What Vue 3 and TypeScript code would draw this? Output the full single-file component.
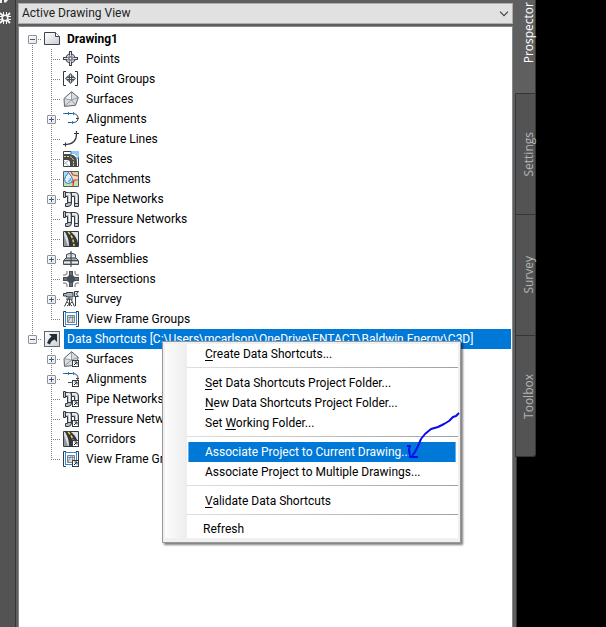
<script setup lang="ts">
import { ref } from 'vue'

interface TreeNode {
  label: string
  icon: string
  expandable?: boolean
}

interface TreeGroup {
  label: string
  icon: string
  bold?: boolean
  selected?: boolean
  shortcuts?: boolean
  children: TreeNode[]
}

interface MenuEntry {
  before?: string
  key?: string
  after?: string
  active?: boolean
  plain?: boolean
  separator?: boolean
}

const view = ref('Active Drawing View')

const groups: TreeGroup[] = [
  {
    label: 'Drawing1',
    icon: 'drawing',
    bold: true,
    children: [
      { label: 'Points', icon: 'point' },
      { label: 'Point Groups', icon: 'point-group' },
      { label: 'Surfaces', icon: 'surface' },
      { label: 'Alignments', icon: 'alignment', expandable: true },
      { label: 'Feature Lines', icon: 'feature-line' },
      { label: 'Sites', icon: 'site' },
      { label: 'Catchments', icon: 'catchment' },
      { label: 'Pipe Networks', icon: 'pipe', expandable: true },
      { label: 'Pressure Networks', icon: 'pipe' },
      { label: 'Corridors', icon: 'corridor' },
      { label: 'Assemblies', icon: 'assembly', expandable: true },
      { label: 'Intersections', icon: 'intersection' },
      { label: 'Survey', icon: 'survey', expandable: true },
      { label: 'View Frame Groups', icon: 'view-frame' },
    ],
  },
  {
    label: 'Data Shortcuts [C:\\Users\\mcarlson\\OneDrive\\ENTACT\\Baldwin Energy\\C3D]',
    icon: 'shortcut',
    selected: true,
    shortcuts: true,
    children: [
      { label: 'Surfaces', icon: 'surface', expandable: true },
      { label: 'Alignments', icon: 'alignment', expandable: true },
      { label: 'Pipe Networks', icon: 'pipe' },
      { label: 'Pressure Networks', icon: 'pipe' },
      { label: 'Corridors', icon: 'corridor' },
      { label: 'View Frame Groups', icon: 'view-frame' },
    ],
  },
]

const menu: MenuEntry[] = [
  { key: 'C', after: 'reate Data Shortcuts...' },
  { separator: true },
  { key: 'S', after: 'et Data Shortcuts Project Folder...' },
  { key: 'N', after: 'ew Data Shortcuts Project Folder...' },
  { before: 'Set ', key: 'W', after: 'orking Folder...' },
  { separator: true },
  { before: 'Associate Project to Current Drawing...', active: true },
  { before: 'Associate Project to Multiple Drawings...' },
  { separator: true },
  { key: 'V', after: 'alidate Data Shortcuts' },
  { separator: true },
  { before: 'Refresh', plain: true },
]

const tabs = ['Prospector', 'Settings', 'Survey', 'Toolbox']
const activeTab = ref('Prospector')
</script>

<template>
  <svg class="sprite" width="0" height="0" aria-hidden="true">
    <linearGradient id="paper" x1="0" y1="0" x2="1" y2="1">
      <stop offset="0" stop-color="#fff" />
      <stop offset="1" stop-color="#c9ced4" />
    </linearGradient>
    <symbol id="drawing" viewBox="0 0 16 16">
      <path d="M.5 1.5H11.5L15.5 5.5V13.5H.5Z" fill="url(#paper)" stroke="#3c434d" />
      <path d="M11.5 1.5V5.5H15.5" fill="#fff" stroke="#3c434d" />
    </symbol>
    <symbol id="point" viewBox="0 0 16 16">
      <circle cx="7.5" cy="7.5" r="4.5" fill="#d4d8dc" stroke="#3c434d" stroke-width="1.2" />
      <path d="M7.5 0V4.5M7.5 10.5V15M0 7.5H4.5M10.5 7.5H15" stroke="#3c434d" stroke-width="3" />
      <path d="M7.5 1V5M7.5 10V14M1 7.5H5M10 7.5H14" stroke="#e3e5e8" />
      <rect x="6" y="6" width="3" height="3" fill="#fff" stroke="#3c434d" />
    </symbol>
    <symbol id="point-group" viewBox="0 0 16 16">
      <path d="M3 .5H.5V14.5H3M12 .5H14.5V14.5H12" fill="none" stroke="#303640" />
      <path d="M7.5 2L13 7.5L7.5 13L2 7.5Z" fill="#4a515b" />
      <path d="M7.5 3.5V6M7.5 9V11.5M3.5 7.5H6M9 7.5H11.5" stroke="#d8dbdf" />
      <path d="M5 5H6M9 5H10M5 10H6M9 10H10" stroke="#c4c8cd" />
      <rect x="7" y="7" width="1" height="1" fill="#fff" />
    </symbol>
    <symbol id="surface" viewBox="0 0 16 16">
      <path d="M8.5 .7L15.4 6.4L12.5 14.3L1.5 15.4L1 7.5Z" fill="#d9dcdf" stroke="#59616b" />
      <path d="M8.5 2L8.5 9L2 7.5Z" fill="#f5f5f5" />
      <path d="M8.5 1V9L15 6.5M8.5 9L12.5 14M8.5 9L1.5 15M8.5 9L1 7.5" fill="none" stroke="#858b92" stroke-width=".8" />
    </symbol>
    <symbol id="alignment" viewBox="0 0 16 16">
      <path d="M0 2.5H10" fill="none" stroke="#3f4650" stroke-dasharray="4 1" />
      <path d="M10 2.5Q15 3 15 7Q15 11.5 10 11.5H5" fill="none" stroke="#3f4650" />
      <path d="M0 2.5H2M4 2.5H6M9 2.5H11M8 11.5H10M5.5 1V4M10.5 1V4M9.5 10V13" stroke="#1484df" />
      <path d="M13 7.5H16" stroke="#3f4650" />
    </symbol>
    <symbol id="feature-line" viewBox="0 0 16 16">
      <path d="M0 13.5H3Q13.5 13 13.5 3V0M2.5 11.5V15.5M11 2.5H16" fill="none" stroke="#303640" stroke-width="1.2" />
    </symbol>
    <symbol id="site" viewBox="0 0 16 16">
      <path d="M.5 .5H15.5V15.5H.5Z" fill="#fff" stroke="#3c434d" />
      <path d="M8 0H16V7L11 3H8Z" fill="#91cbf2" />
      <path d="M0 3H7Q14 4 14 11V15H7V12Q7 9 4 9H0Z" fill="#444b55" />
      <path d="M1 5.5H6Q10.5 6 10.5 11V15" fill="none" stroke="#ffd23c" stroke-dasharray="2 1" />
      <path d="M1 10L5.5 15M5 10L1 13" stroke="#a7b0b8" />
      <path d="M8 3V.5M13 7H16" stroke="#1580d0" />
    </symbol>
    <symbol id="catchment" viewBox="0 0 16 16">
      <path d="M.5 .5H15.5V15.5H.5Z" fill="#f5d9c4" stroke="#555c65" />
      <path d="M1 1H6L1 7Z" fill="#a9dbf6" />
      <path d="M10 10L15 9V15H1V12H9Z" fill="#bfe6a8" />
      <path d="M8 1L10 3L15 5V1Z" fill="#b9e3a5" />
      <path d="M8 1L10 4L15 5M15 9H11L10 15M11 9L9 12" fill="none" stroke="#e5322f" stroke-width="1.2" />
      <path d="M5.5 1.5Q9.5 6 9.5 8.5A4 4 0 0 1 1.5 8.5Q1.5 6 5.5 1.5Z" fill="#dff2fd" stroke="#2777b9" />
      <path d="M7.5 7Q8 10 5 10.5" fill="none" stroke="#67b2e5" stroke-width="1.5" />
    </symbol>
    <symbol id="pipe" viewBox="0 0 16 16">
      <path d="M.5 .5H2.5V1.5H5.5Q8.5 1.5 8.5 4V12Q8.5 15.5 5 15.5H2.5V12.5H4.5V5.5H2.5V6.5H.5Z" fill="#b8bdc3" stroke="#343b45" />
      <path d="M7 1.5H12Q15.5 1.5 15.5 5V15.5H11.5V5.5H8.5" fill="#b8bdc3" stroke="#343b45" />
      <path d="M3 3H6Q6.5 3 6.5 4V12M9 3H12Q13.5 3 13.5 5V14" fill="none" stroke="#f4f5f6" stroke-width="1.4" />
      <path d="M2.5 1V6M8.5 1V6M5 11.5H8M12 12.5H15" stroke="#343b45" />
    </symbol>
    <symbol id="corridor" viewBox="0 0 16 16">
      <path d="M.5 .5H15.5V15.5H.5Z" fill="#dfe1e3" stroke="#343b45" />
      <path d="M2 1H8Q14 6 15 12V15H6Q6 7 2 1Z" fill="#30373f" />
      <path d="M5 1Q10.5 6 11 15" fill="none" stroke="#f4ca38" stroke-width="1.6" stroke-dasharray="3 1.5" />
      <path d="M1 4L5 15H1Z" fill="#92979c" />
    </symbol>
    <symbol id="assembly" viewBox="0 0 16 16">
      <path d="M3.5 7V3.5Q8 .5 12.5 3.5V7" fill="#d7dade" stroke="#464d57" />
      <path d="M3 7H13L15.5 9.5V13.5H.5V9.5Z" fill="#aeb3b9" stroke="#464d57" />
      <path d="M1 9.5H15" stroke="#464d57" />
      <path d="M1 11.5H7M9 11.5H15M4 5.5H7M9 5.5H12" stroke="#eceef0" />
      <path d="M8 0V16" stroke="#343b45" />
    </symbol>
    <symbol id="intersection" viewBox="0 0 16 16">
      <path d="M6 0V3Q6 6 3 6H0V10H3Q6 10 6 13V16H10V13Q10 10 13 10H16V6H13Q10 6 10 3V0Z" fill="#464d56" />
      <path d="M4 0V2Q4 4 2 4H0M12 0V2Q12 4 14 4H16M4 16V14Q4 12 2 12H0M12 16V14Q12 12 14 12H16" fill="none" stroke="#646b74" />
      <path d="M8 1V4M8 12V15M1 8H4M12 8H15" stroke="#8b9199" />
    </symbol>
    <symbol id="survey" viewBox="0 0 16 16">
      <path d="M.5 2.5H3.5V1.5H10V6H3.5V5H.5Z" fill="#adb3ba" stroke="#343b45" />
      <path d="M6 6V9M3 8H10M5 8L1.5 15.5M8 8L11.5 15.5M6.5 8V15M4 11L9 15M9 11L4 15" fill="none" stroke="#343b45" />
      <path d="M11.5 .5H15.5L13.5 3L15.5 5.5H11.5ZM12.5 6V15" fill="#dfe2e5" stroke="#343b45" />
    </symbol>
    <symbol id="view-frame" viewBox="0 0 16 16">
      <path d="M3 .5H.5V15.5H3M13 .5H15.5V15.5H13" fill="none" stroke="#343b45" />
      <rect x="2.5" y="1.5" width="11" height="12" fill="#fff" stroke="#2c8ae0" />
      <path d="M4.5 4.5H11.5V11.5H4.5Z" fill="#d9dde1" stroke="#79818a" />
      <path d="M5 6.5H11M8 5L5 11M9.5 5V11" stroke="#79818a" stroke-width=".8" />
    </symbol>
    <symbol id="shortcut" viewBox="0 0 16 16">
      <rect x=".5" y=".5" width="15" height="15" fill="url(#paper)" stroke="#5f666f" />
      <path d="M5 3H13V11L10.5 8.5Q6.5 10 6 13.5L3 12Q4 8 7.5 5.5Z" fill="#262d36" />
    </symbol>
    <symbol id="badge" viewBox="0 0 7 7">
      <rect x=".5" y=".5" width="6" height="6" fill="#fff" stroke="#343b45" />
      <path d="M2 5L4.7 2.3M2.5 2H5V4.5" fill="none" stroke="#20262e" />
    </symbol>
  </svg>

  <div class="app">
    <aside class="rail">
      <svg class="rail-icons" viewBox="0 0 15 26" aria-hidden="true">
        <path d="M0 0H2V3H0ZM4 0H8L6 2.5H4Z" fill="#eee" />
        <path d="M3.5 12V24M6.5 12V24M-1 16.5H11M-1 19.5H11" stroke="#f5f5f5" />
        <path d="M0 13L10 23M10 13L0 23" stroke="#f5f5f5" stroke-width="1.8" />
        <circle cx="5" cy="18" r="3.6" fill="#f5f5f5" />
        <circle cx="5" cy="18" r="2" fill="#535353" />
      </svg>
    </aside>

    <main class="panel">
      <div class="picker">
        <select v-model="view" aria-label="View">
          <option>Active Drawing View</option>
          <option>Master View</option>
        </select>
        <svg class="chevron" viewBox="0 0 10 6" aria-hidden="true">
          <path d="M1 .7L5 4.7L9 .7" fill="none" stroke="#444" stroke-width="1.2" />
        </svg>
      </div>

      <ul class="tree">
        <li v-for="(group, g) in groups" :key="group.label" class="group">
          <div class="row">
            <span class="cell tick" :class="{ first: g === 0, last: g === groups.length - 1 }">
              <button class="toggle" type="button" :aria-label="'Collapse ' + group.icon"></button>
            </span>
            <svg class="icon"><use :href="'#' + group.icon" /></svg>
            <span class="label" :class="{ bold: group.bold, selected: group.selected }">{{ group.label }}</span>
          </div>
          <ul class="children">
            <li v-for="(node, n) in group.children" :key="node.label" class="row">
              <span class="cell" :class="{ line: g < groups.length - 1 }"></span>
              <span class="cell tick" :class="{ last: n === group.children.length - 1 }">
                <button v-if="node.expandable" class="toggle plus" type="button" :aria-label="'Expand ' + node.label"></button>
              </span>
              <span class="icon-box">
                <svg class="icon"><use :href="'#' + node.icon" /></svg>
                <svg v-if="group.shortcuts" class="badge"><use href="#badge" /></svg>
              </span>
              <span class="label">{{ node.label }}</span>
            </li>
          </ul>
        </li>
      </ul>
    </main>

    <nav class="tabs">
      <button
        v-for="tab in tabs"
        :key="tab"
        type="button"
        class="tab"
        :class="{ current: tab === activeTab }"
        @click="activeTab = tab"
      >
        <span>{{ tab }}</span>
      </button>
    </nav>
    <div class="canvas"></div>

    <div class="menu" role="menu">
      <template v-for="(entry, i) in menu" :key="i">
        <div v-if="entry.separator" class="separator" role="separator"></div>
        <button v-else type="button" role="menuitem" class="item" :class="{ active: entry.active, plain: entry.plain }">{{ entry.before }}<u v-if="entry.key">{{ entry.key }}</u>{{ entry.after }}</button>
      </template>
    </div>

    <svg class="ink" viewBox="0 0 56 50" aria-hidden="true">
      <path d="M53 3L50 6L47 7L43 11L38 14L32 17L25 19L19 24L15 29L12 36L9 42L6 46" />
      <path d="M1 36H4L3 39L4 47H12" />
    </svg>
  </div>
</template>

<style>
body {
  margin: 0;
  background: #000;
}
</style>

<style scoped>
.sprite {
  position: absolute;
}

.app {
  position: relative;
  display: flex;
  min-height: 100vh;
  overflow: hidden;
  background: #000;
  color: #000;
  font: 12px/20px Roboto, "Open Sans", sans-serif;
}

button,
select {
  font: inherit;
}

ul {
  margin: 0;
  padding: 0;
  list-style: none;
}

.rail {
  flex: none;
  width: 15px;
  background: #535353;
  border-right: 1px solid #353535;
}

.rail-icons {
  display: block;
  width: 15px;
  height: 26px;
}

.panel {
  flex: 1;
  min-width: 0;
  display: flex;
  flex-direction: column;
  gap: 2px;
  padding: 3px 1px 0 2px;
  background: #5f5f5f;
}

.picker {
  display: grid;
  align-items: center;
}

.picker > * {
  grid-area: 1 / 1;
}

.picker select {
  width: 100%;
  height: 21px;
  padding: 0 24px 0 3px;
  border: 1px solid #adadad;
  border-radius: 0;
  background: #e1e1e1;
  color: #222;
  line-height: 19px;
  appearance: none;
}

.chevron {
  justify-self: end;
  width: 10px;
  height: 6px;
  margin-right: 4px;
  pointer-events: none;
}

.tree {
  flex: 1;
  padding: 2px 1px 0 4px;
  border: 1px solid #828790;
  border-bottom: 0;
  background: #fff;
}

.row {
  display: flex;
  align-items: center;
  height: 20px;
}

.cell {
  flex: none;
  display: grid;
  place-items: center;
  width: 19px;
  height: 20px;
  background-repeat: no-repeat;
}

.line {
  background-image: repeating-linear-gradient(#808080 0 1px, transparent 1px 2px);
  background-size: 1px 20px;
  background-position: 9px 0;
}

.tick {
  background-image:
    repeating-linear-gradient(#808080 0 1px, transparent 1px 2px),
    repeating-linear-gradient(90deg, #808080 0 1px, transparent 1px 2px);
  background-size: 1px 20px, 10px 1px;
  background-position: 9px 0, 9px 10px;
}

.tick.first {
  background-size: 1px 10px, 10px 1px;
  background-position: 9px 10px, 9px 10px;
}

.tick.last {
  background-size: 1px 10px, 10px 1px;
}

.toggle {
  width: 9px;
  height: 9px;
  padding: 0;
  border: 1px solid #919191;
  border-radius: 1px;
  background:
    linear-gradient(#3c5a9c, #3c5a9c) center / 5px 1px no-repeat,
    linear-gradient(135deg, #fff, #e4e4e4);
}

.toggle.plus {
  background:
    linear-gradient(#3c5a9c, #3c5a9c) center / 5px 1px no-repeat,
    linear-gradient(#3c5a9c, #3c5a9c) center / 1px 5px no-repeat,
    linear-gradient(135deg, #fff, #e4e4e4);
}

.icon {
  flex: none;
  display: block;
  width: 16px;
  height: 16px;
}

.row > .icon,
.icon-box {
  margin: 0 4px 0 2px;
}

.icon-box {
  position: relative;
  flex: none;
}

.badge {
  position: absolute;
  right: 0;
  bottom: 0;
  width: 7px;
  height: 7px;
}

.label {
  padding: 0 3px;
  white-space: nowrap;
}

.label.bold {
  font-weight: 700;
}

.label.selected {
  flex: 1;
  min-width: 0;
  overflow: hidden;
  background: #0078d7;
  color: #fff;
}

.tabs {
  flex: none;
  box-sizing: border-box;
  width: 22px;
  padding-left: 1px;
  background: linear-gradient(90deg, #5f5f5f 0 2px, #353535 2px 3px, #000 3px);
  font-family: "Open Sans", "Noto Sans", sans-serif;
}

.tab {
  display: grid;
  place-items: center;
  width: 100%;
  height: 121px;
  padding: 0 0 0 3px;
  border: 1px solid #353535;
  border-width: 0 1px 1px;
  background: #535353;
  color: #b4b4b4;
}

.tab:first-child {
  margin-top: -27px;
}

.tab:last-child {
  border-radius: 0 0 3px 0;
}

.tab.current {
  border-left-color: #5f5f5f;
  background: #5f5f5f;
  color: #fff;
}

.tab span {
  writing-mode: vertical-rl;
  transform: rotate(180deg);
}

.canvas {
  flex: none;
  width: 70px;
}

.menu {
  position: absolute;
  top: 341px;
  left: 162px;
  width: 299px;
  box-sizing: border-box;
  padding: 2px 2px 4px;
  border: 1px solid #979797;
  background:
    linear-gradient(90deg, #fcfcfc, #ededed) 2px 2px / 22px calc(100% - 6px) no-repeat,
    #f0f0f0;
  box-shadow: 2px 2px 2px rgba(0, 0, 0, 0.5);
}

.item {
  display: block;
  width: calc(100% - 22px);
  height: 20px;
  margin-left: 22px;
  padding: 0 0 0 18px;
  border: 0;
  background: #fff;
  color: #000;
  line-height: 20px;
  text-align: left;
  white-space: nowrap;
}

.item.plain {
  height: 18px;
  padding-left: 16px;
  line-height: 18px;
}

.item.active {
  background: linear-gradient(90deg, #fff 0 1px, #66aee7 1px 2px, #0078d7 2px calc(100% - 3px), #66aee7 calc(100% - 3px) calc(100% - 2px), #fff calc(100% - 2px));
  color: #fff;
}

.item u {
  text-underline-offset: 2px;
}

.separator {
  height: 9px;
  margin-left: 22px;
  background:
    linear-gradient(90deg, #e0e0e0, #a0a0a0) 0 3px / 100% 1px no-repeat,
    #fff;
}

.ink {
  position: absolute;
  top: 410px;
  left: 406px;
  width: 56px;
  height: 50px;
  fill: none;
  stroke: #0909f2;
  stroke-width: 2;
  stroke-linejoin: round;
  pointer-events: none;
}
</style>
